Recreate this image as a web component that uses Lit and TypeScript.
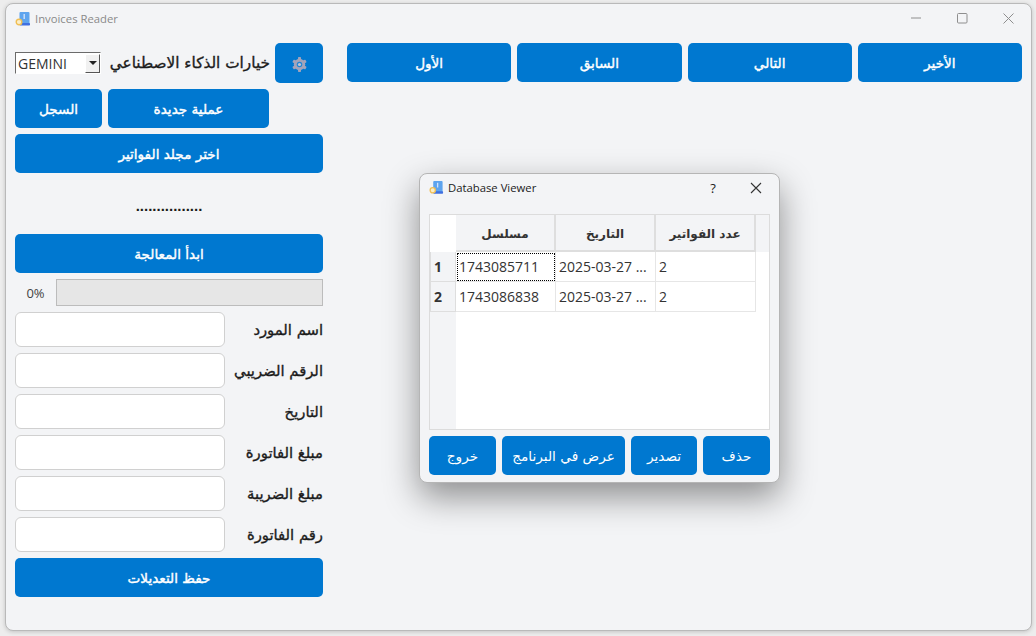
import { LitElement, html, css, svg } from "lit";
import { customElement } from "lit/decorators.js";

const appIcon = (s: number) => html`<svg width=${s} height=${s} viewBox="0 0 16 16">
  <rect x="4.5" y="1" width="10" height="12" rx="1" fill="#5ea4ee"/>
  <rect x="4.5" y="12" width="10.5" height="2.6" rx=".8" fill="#3f6fe0"/>
  <rect x="8.5" y="3" width="1.4" height="5" fill="#cfe2fa"/>
  <circle cx="4" cy="11" r="2.8" fill="#fbeec8" stroke="#f0bf55" stroke-width="1.4"/>
</svg>`;

const gear = svg`<svg width="17" height="17" viewBox="0 0 16 16">
  <g fill="#a3a3ba">
    <circle cx="8" cy="8" r="5.4"/>
    <rect x="6.6" y="1" width="2.8" height="14" rx=".6"/>
    <rect x="6.6" y="1" width="2.8" height="14" rx=".6" transform="rotate(60 8 8)"/>
    <rect x="6.6" y="1" width="2.8" height="14" rx=".6" transform="rotate(120 8 8)"/>
  </g>
  <circle cx="8" cy="8" r="2.6" fill="#1f86d6"/>
  <circle cx="8" cy="8" r="1.5" fill="#c4c4d4"/>
</svg>`;

@customElement("app-root")
export class AppRoot extends LitElement {
  static styles = css`
    :host {
      display: block;
      position: relative;
      width: 1036px;
      height: 636px;
      overflow: hidden;
      background: #ededed;
      font-family: "DejaVu Sans", sans-serif;
      color: #1b1b1b;
    }
    .window {
      position: absolute;
      left: 5px;
      top: 3px;
      width: 1027px;
      height: 628px;
      box-sizing: border-box;
      background: #f3f4f6;
      border: 1px solid #b9b9b9;
      border-radius: 8px;
      box-shadow: 0 1px 4px rgba(0, 0, 0, 0.18);
      display: flex;
      flex-direction: column;
      overflow: hidden;
    }
    .titlebar {
      height: 39px;
      flex: none;
      display: flex;
      align-items: flex-start;
      padding: 7px 0 0 9px;
      box-sizing: border-box;
      gap: 4px;
    }
    .app-title {
      font-family: "Open Sans", sans-serif;
      font-size: 11.3px;
      line-height: 16px;
      color: #8a8a8a;
    }
    .caption {
      margin-left: auto;
      display: flex;
      align-items: center;
    }
    .caption button {
      width: 46px;
      height: 14px;
      border: 0;
      padding: 0;
      background: none;
      display: grid;
      place-items: center;
    }
    .body {
      display: flex;
      gap: 24px;
      padding-left: 9px;
      flex: 1;
    }
    .left {
      width: 308px;
      display: flex;
      flex-direction: column;
      gap: 6px;
    }
    .btn {
      height: 39px;
      box-sizing: border-box;
      border: 0;
      border-radius: 5px;
      background: #0078d0;
      color: #fff;
      font-family: "DejaVu Sans", sans-serif;
      font-size: 13.6px;
      font-weight: 400;
      -webkit-text-stroke: 0.4px #fff;
      display: flex;
      align-items: center;
      justify-content: center;
      padding: 0;
    }
    .ai-row {
      display: flex;
      align-items: center;
      height: 40px;
    }
    .combo {
      width: 86px;
      height: 22px;
      box-sizing: border-box;
      background: #fff;
      border: 1px solid;
      border-color: #6b6b6b #fff #fff #6b6b6b;
      display: flex;
      align-items: center;
      justify-content: space-between;
      padding: 0 0 0 2px;
      font-family: "Open Sans", sans-serif;
      font-size: 14px;
      color: #333;
    }
    .arrow {
      width: 15px;
      height: 19px;
      box-sizing: border-box;
      background: #f1f1f1;
      border: 1px solid #555;
      border-top-color: #fff;
      border-left-color: #fff;
      display: grid;
      place-items: center;
    }
    .arrow i {
      width: 0;
      height: 0;
      border-left: 4px solid transparent;
      border-right: 4px solid transparent;
      border-top: 4px solid #222;
    }
    .ai-label {
      margin-left: 8px;
      width: 161px;
      display: flex;
      justify-content: flex-end;
      font-size: 15.3px;
      -webkit-text-stroke: 0.35px #1b1b1b;
      white-space: nowrap;
    }
    .gear {
      width: 48px;
      height: 40px;
      margin-left: 5px;
      flex: none;
      padding: 2px 0 0 1px;
    }
    .two {
      display: flex;
      gap: 6px;
    }
    .log { width: 87px; }
    .new { width: 161px; }
    .dots {
      height: 49px;
      display: flex;
      align-items: center;
      justify-content: center;
      font-family: "Liberation Sans", sans-serif;
      font-size: 15px;
      font-weight: 700;
      padding-top: 3px;
      box-sizing: border-box;
    }
    .progress {
      display: flex;
      align-items: center;
      height: 27px;
    }
    .pct {
      width: 41px;
      text-align: center;
      font-family: "Open Sans", sans-serif;
      font-size: 13px;
      color: #444;
    }
    .track {
      flex: 1;
      height: 27px;
      box-sizing: border-box;
      background: #e6e6e6;
      border: 1px solid #bcbcbc;
    }
    .field {
      display: flex;
      align-items: center;
      justify-content: space-between;
    }
    .input {
      width: 210px;
      height: 35px;
      box-sizing: border-box;
      background: #fff;
      border: 1px solid #d0d0d0;
      border-radius: 6px;
    }
    .field label {
      font-size: 14.8px;
      -webkit-text-stroke: 0.35px #1b1b1b;
      white-space: nowrap;
    }
    .nav {
      display: flex;
      gap: 6px;
      align-items: flex-start;
    }
    .nav .btn { width: 164.25px; }
    .dialog {
      position: absolute;
      left: 419px;
      top: 173px;
      width: 361px;
      height: 310px;
      box-sizing: border-box;
      background: #f3f4f6;
      border: 1px solid #b5b5b5;
      border-radius: 8px;
      box-shadow: 0 14px 34px rgba(0, 0, 0, 0.42);
      display: flex;
      flex-direction: column;
      padding: 0 9px 7px 9px;
    }
    .dlg-title {
      height: 40px;
      padding-bottom: 13px;
      box-sizing: border-box;
      display: flex;
      align-items: center;
      gap: 4px;
      font-family: "Open Sans", sans-serif;
      font-size: 11.3px;
      color: #1b1b1b;
      flex: none;
    }
    .help {
      margin-left: auto;
      font-size: 13px;
      width: 50px;
      text-align: center;
    }
    .close {
      width: 28px;
      display: grid;
      place-items: center;
    }
    .table {
      height: 216px;
      flex: none;
      box-sizing: border-box;
      background: #fff;
      border: 1px solid #dcdcdc;
      display: grid;
      grid-template-columns: 26px 100px 100px 100px 1fr;
      grid-template-rows: 37px 30px 30px 1fr;
    }
    .corner { background: #fff; }
    .th {
      background: #f3f4f6;
      border-right: 2px solid #dedede;
      border-bottom: 2px solid #dedede;
      display: flex;
      align-items: center;
      justify-content: center;
      padding-top: 2px;
      font-size: 12px;
      font-weight: 700;
      color: #333;
      box-sizing: border-box;
    }
    .th.tail { border-right: 0; border-bottom: 0; }
    .rh {
      background: #f3f4f6;
      border: 1px solid #dedede;
      border-width: 0 1px 1px 1px;
      display: flex;
      align-items: center;
      padding-left: 3px;
      font-family: "Open Sans", sans-serif;
      font-size: 14px;
      font-weight: 700;
      color: #333;
      box-sizing: border-box;
    }
    .td {
      border-right: 1px solid #e6e6e6;
      border-bottom: 1px solid #e6e6e6;
      display: flex;
      align-items: center;
      padding-left: 3px;
      font-family: "Open Sans", sans-serif;
      font-size: 14px;
      color: #333;
      box-sizing: border-box;
      white-space: nowrap;
    }
    .td.focus {
      outline: 1px dotted #000;
      outline-offset: -2px;
    }
    .rest-h { background: #f3f4f6; }
    .dlg-btns {
      display: flex;
      justify-content: space-between;
      margin-top: 6px;
      height: 39px;
    }
    .dlg-btns .btn { font-size: 13.7px; -webkit-text-stroke: 0; }
    .b-exit { width: 67px; }
    .b-view { width: 123px; }
    .b-export { width: 66px; }
    .b-del { width: 67px; }
  `;

  private field(label: string) {
    return html`<div class="field"><div class="input"></div><label>${label}</label></div>`;
  }

  render() {
    return html`
      <div class="window">
        <div class="titlebar">
          ${appIcon(16)}
          <span class="app-title">Invoices Reader</span>
          <div class="caption">
            <button>
              <svg width="11" height="2" viewBox="0 0 11 2"><path d="M0 1h10" stroke="#8e8e8e" stroke-width="1"/></svg>
            </button>
            <button>
              <svg width="11" height="11" viewBox="0 0 11 11"><rect x=".5" y=".5" width="9.5" height="9.5" rx="1" fill="none" stroke="#8e8e8e"/></svg>
            </button>
            <button>
              <svg width="11" height="11" viewBox="0 0 11 11"><path d="M.5.5l10 10M10.5.5l-10 10" stroke="#8e8e8e" stroke-width="1"/></svg>
            </button>
          </div>
        </div>
        <div class="body">
          <div class="left">
            <div class="ai-row">
              <div class="combo">GEMINI<span class="arrow"><i></i></span></div>
              <div class="ai-label">خيارات الذكاء الاصطناعي</div>
              <button class="btn gear">${gear}</button>
            </div>
            <div class="two">
              <button class="btn log">السجل</button>
              <button class="btn new">عملية جديدة</button>
            </div>
            <button class="btn">اختر مجلد الفواتير</button>
            <div class="dots">................</div>
            <button class="btn">ابدأ المعالجة</button>
            <div class="progress"><span class="pct">0%</span><div class="track"></div></div>
            ${this.field("اسم المورد")}
            ${this.field("الرقم الضريبي")}
            ${this.field("التاريخ")}
            ${this.field("مبلغ الفاتورة")}
            ${this.field("مبلغ الضريبة")}
            ${this.field("رقم الفاتورة")}
            <button class="btn">حفظ التعديلات</button>
          </div>
          <div class="nav">
            <button class="btn">الأول</button>
            <button class="btn">السابق</button>
            <button class="btn">التالي</button>
            <button class="btn">الأخير</button>
          </div>
        </div>
      </div>
      <div class="dialog">
        <div class="dlg-title">
          ${appIcon(15)}
          <span>Database Viewer</span>
          <span class="help">?</span>
          <span class="close">
            <svg width="12" height="12" viewBox="0 0 12 12"><path d="M1 1l10 10M11 1L1 11" stroke="#333" stroke-width="1.1"/></svg>
          </span>
        </div>
        <div class="table">
          <div class="corner"></div>
          <div class="th">مسلسل</div>
          <div class="th">التاريخ</div>
          <div class="th">عدد الفواتير</div>
          <div class="th tail"></div>
          <div class="rh">1</div>
          <div class="td focus">1743085711</div>
          <div class="td">2025-03-27 ...</div>
          <div class="td">2</div>
          <div></div>
          <div class="rh">2</div>
          <div class="td">1743086838</div>
          <div class="td">2025-03-27 ...</div>
          <div class="td">2</div>
          <div></div>
          <div class="rest-h"></div>
        </div>
        <div class="dlg-btns">
          <button class="btn b-exit">خروج</button>
          <button class="btn b-view">عرض في البرنامج</button>
          <button class="btn b-export">تصدير</button>
          <button class="btn b-del">حذف</button>
        </div>
      </div>
    `;
  }
}
